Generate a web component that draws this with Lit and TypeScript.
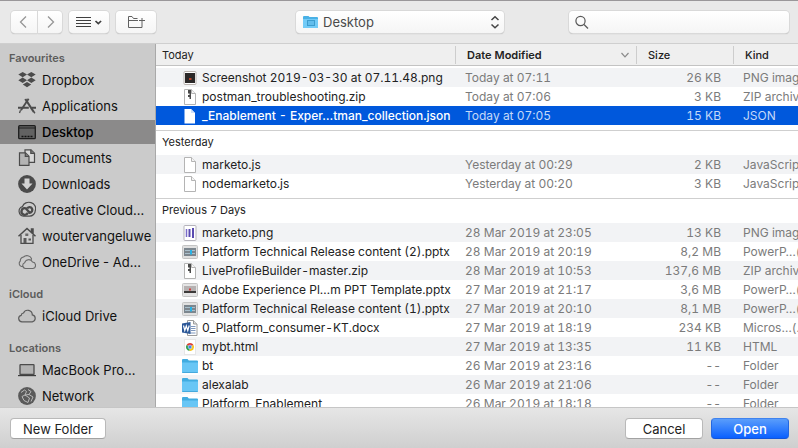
import { LitElement, html, svg, css, nothing } from "lit";
import { customElement, property, state } from "lit/decorators.js";
import { classMap } from "lit/directives/class-map.js";

const page = svg`<path d="M2.500 .5h7l4 4v11h-11z" fill="#fff" stroke="#b4b4b4"/><path d="M9.500 .5v4h4" fill="#f4f4f4" stroke="#b4b4b4"/>`;

const fileIcons: Record<string, unknown> = {
  shot: svg`<rect x="2" y="1.500" width="12" height="13" rx="1" fill="#fff" stroke="#b9b2ae"/><rect x="3" y="3" width="10" height="10" fill="#2b2828"/><rect x="7" y="8" width="2.500" height="2" fill="#b8442a"/>`,
  zip: svg`${page}<path d="M6 1h3v9H7.500V8H6V6h1.500V4.500H6z" fill="#4a4a4a"/>`,
  doc: page,
  docSelected: svg`<path d="M2.500 1h6.500l4 4v10.500H2.500z" fill="#fff"/><path d="M9 1v4h4" fill="#cfe0fa"/>`,
  bars: svg`<rect x="2" y=".5" width="12" height="15" rx="1" fill="#fff" stroke="#b5b3bb"/><path d="M4.500 4v8" stroke="#7a6cc8" stroke-width="1.500"/><path d="M7.500 4v8" stroke="#5a4bb0" stroke-width="2"/><path d="M11 3v10" stroke="#5a4bb0" stroke-width="2"/>`,
  deckBlue: svg`<rect x=".5" y="1.500" width="15" height="13" rx="1" fill="#e0e0e0" stroke="#c4c4c4"/><rect x="2" y="4" width="12" height="8" fill="#7c868e"/><path d="M3 6.500h10M3 9.500h10" stroke="#a9bfcc"/><rect x="8" y="6" width="2" height="4.500" fill="#27b4e8"/>`,
  deckRed: svg`<rect x=".5" y="1.500" width="15" height="13" rx="1" fill="#e4e4e4" stroke="#c4c4c4"/><rect x="2" y="4" width="12" height="5" fill="#b5b1b1"/><rect x="2" y="9" width="12" height="2" fill="#3c3a3a"/><rect x="7" y="6.500" width="2" height="2" fill="#d33c3c"/>`,
  word: svg`<path d="M5.500 .5h6l3.500 3.500v11.500h-9.500z" fill="#fff" stroke="#9c9c9c"/><path d="M11.500 .5v3.500h3.500" fill="#ddd" stroke="#9c9c9c"/><path d="M9 6.500h4.500M9 8.500h4.500M9 10.500h4.500M7 13h6.500" stroke="#7f97bd"/><path d="M0 3.500 8.500 2v12L0 12.500z" fill="#2b5797"/><path d="M1.500 5.500 2.800 10.500 4.300 6l1.500 4.500L7.200 5.500" fill="none" stroke="#fff" stroke-width="1.200"/>`,
  chrome: svg`<rect x="2.500" y=".5" width="11" height="15" fill="#fff" stroke="#e6e6e6"/><path d="M8 8 4.500 6A4 4 0 0 1 11.500 6z" fill="#dd3b2e"/><path d="M8 8 4.500 6A4 4 0 0 0 7.500 12z" fill="#2d9d4e"/><path d="M8 8h0L11.500 6A4 4 0 0 1 7.500 12z" fill="#f5c518"/><circle cx="8" cy="8" r="1.900" fill="#4187f0" stroke="#fff" stroke-width=".5"/>`,
  folder: svg`<path d="M0 2q0-1 1-1h4.500l1.300 1.500H15q1 0 1 1V14q0 1-1 1H1q-1 0-1-1z" fill="#41ace0"/><path d="M0 4.500h16V14q0 1-1 1H1q-1 0-1-1z" fill="#68c6f5"/><path d="M.5 14.500h15" stroke="#45a9dc"/>`,
};

const placeIcons: Record<string, unknown> = {
  dropbox: svg`<g fill="#4b4b4b"><path d="M4.700 1 9 3.600 4.700 6.300.3 3.600zM13.300 1l4.400 2.600-4.400 2.700L9 3.600zM4.700 6.600 9 9.200l-4.300 2.700L.3 9.200zM13.300 6.600l4.400 2.600-4.400 2.700L9 9.200zM9 11l4.200 2.600L9 16.200l-4.200-2.600z"/></g>`,
  apps: svg`<g fill="none" stroke="#4b4b4b"><path d="M7.300 2 15.800 15" stroke-width="2.200"/><path d="M10.600 1.800 3 13.200" stroke-width="1.900"/><path d="M0 10.800h10.800M13.800 10.800H18" stroke-width="1.900"/><path d="M2.500 13.200l-1 2.800M15.500 14.500l1.500 1.700" stroke-width="1.300"/></g>`,
  desktop: svg`<rect x=".7" y="2.700" width="16.600" height="13" rx="1" fill="#626262" stroke="#1e1e1e" stroke-width="1.300"/><path d="M1 5h16" stroke="#1e1e1e"/><path d="M3.500 13.500h11" stroke="#111" stroke-width="1.600" stroke-dasharray="2 1"/>`,
  documents: svg`<g fill="#d9d9d9" stroke="#4b4b4b" stroke-width="1.200"><path d="M7 .8h6l3.500 3.500v9H7z"/><path d="M12.800.8v3.700h3.700" fill="#777"/><path d="M1.500 3.800h6l3.500 3.500v9H1.500z" fill="#b4b4b4"/><path d="M7.300 3.800v3.700H11" fill="#777"/></g>`,
  downloads: svg`<circle cx="9" cy="9" r="8.900" fill="#4b4b4b"/><path d="M6.500 3.500h5V8.500h3L9 14.500 3.500 8.500h3z" fill="#d4d4d4"/>`,
  creative: svg`<g fill="none" stroke="#4b4b4b"><path d="M5.500 15.200A5 5 0 0 1 4.500 5.500 6.500 6 0 0 1 17.300 9.500a5.800 5.800 0 0 1-5.800 5.700z" stroke-width="1.200"/><path d="M9.800 11.800A3.300 3.300 0 1 1 7.600 7.300l4.200 4.500a2.800 2.800 0 1 0-2.500-4.500" stroke-width="2.300"/></g>`,
  home: svg`<path d="M3 8v8.300h12V8" fill="#d0d0d0" stroke="#4b4b4b" stroke-width="1.300"/><path d="M.5 9.200 9 1.500l8.500 7.700M13.500 5V2h1.500v4.500" fill="none" stroke="#4b4b4b" stroke-width="1.500"/><rect x="7.300" y="6.500" width="3" height="2.500" fill="#6a6a6a"/><path d="M5.500 11h3v5h-3zM10.500 11.500h2.500v2h-2.500z" fill="#5a5a5a"/>`,
  onedrive: svg`<g fill="#cbcbcb" stroke="#6a6a6a" stroke-width="1.100"><path d="M3.500 13.500A3.200 3.200 0 0 1 2.300 8 4 4 0 0 1 5.500 4 5 5 0 0 1 13.500 5.500l-2 8z"/><path d="M7.500 15.500a3 3 0 0 1-.8-5.800A4.200 4.200 0 0 1 14.500 9a3.300 3.300 0 0 1 .5 6.500z"/></g>`,
  icloud: svg`<path d="M4 14.800A3.300 3.300 0 0 1 3.200 8.300 2.600 2.600 0 0 1 5.500 6 4.600 4.600 0 0 1 14.300 7.900 3.500 3.500 0 0 1 14.300 14.800z" fill="#c3c3c3" stroke="#5c5c5c" stroke-width="1.200"/>`,
  macbook: svg`<rect x="2" y="3.700" width="14" height="9.800" rx=".6" fill="#b2b2b2" stroke="#4b4b4b" stroke-width="1.300"/><path d="M0 14h18v1.200H0z" fill="#3d3d3d"/>`,
  network: svg`<circle cx="9" cy="9" r="8.900" fill="#5a5a5a"/><path d="M3 5.500 6.500 3l2 1.500L7 8l-3 1.500 2 4M10 2.500l3 2-2 3 4 2.500-2 4.500M7 8l4-.5M6 13.500l4 2 1.500-4.500L7 8" fill="none" stroke="#b9b9b9"/>`,
};

interface FileEntry { name: string; icon: string; date: string; size: string; kind: string; }

const f = (icon: string, name: string, date: string, size: string, kind: string): FileEntry => ({ name, icon, date, size, kind });

const groups: { title: string; files: FileEntry[] }[] = [
  { title: "Today", files: [
    f("shot", "Screenshot 2019-03-30 at 07.11.48.png", "Today at 07:11", "26 KB", "PNG image"),
    f("zip", "postman_troubleshooting.zip", "Today at 07:06", "3 KB", "ZIP archive"),
    f("doc", "_Enablement - Exper…tman_collection.json", "Today at 07:05", "15 KB", "JSON"),
  ] },
  { title: "Yesterday", files: [
    f("doc", "marketo.js", "Yesterday at 00:29", "2 KB", "JavaScript"),
    f("doc", "nodemarketo.js", "Yesterday at 00:20", "3 KB", "JavaScript"),
  ] },
  { title: "Previous 7 Days", files: [
    f("bars", "marketo.png", "28 Mar 2019 at 23:05", "13 KB", "PNG image"),
    f("deckBlue", "Platform Technical Release content (2).pptx", "28 Mar 2019 at 20:19", "8,2 MB", "PowerP…(.pptx)"),
    f("zip", "LiveProfileBuilder-master.zip", "28 Mar 2019 at 10:53", "137,6 MB", "ZIP archive"),
    f("deckRed", "Adobe Experience Pl…m PPT Template.pptx", "27 Mar 2019 at 21:17", "3,6 MB", "PowerP…(.pptx)"),
    f("deckBlue", "Platform Technical Release content (1).pptx", "27 Mar 2019 at 20:10", "8,1 MB", "PowerP…(.pptx)"),
    f("word", "0_Platform_consumer-KT.docx", "27 Mar 2019 at 18:19", "234 KB", "Micros…(.docx)"),
    f("chrome", "mybt.html", "27 Mar 2019 at 13:35", "11 KB", "HTML"),
    f("folder", "bt", "26 Mar 2019 at 23:16", "--", "Folder"),
    f("folder", "alexalab", "26 Mar 2019 at 21:06", "--", "Folder"),
    f("folder", "Platform_Enablement", "26 Mar 2019 at 18:18", "--", "Folder"),
  ] },
];

const places = [
  { title: "Favourites", items: [
    ["dropbox", "Dropbox"], ["apps", "Applications"], ["desktop", "Desktop"], ["documents", "Documents"],
    ["downloads", "Downloads"], ["creative", "Creative Cloud…"], ["home", "woutervangeluwe"], ["onedrive", "OneDrive - Ad…"],
  ] },
  { title: "iCloud", items: [["icloud", "iCloud Drive"]] },
  { title: "Locations", items: [["macbook", "MacBook Pro…"], ["network", "Network"]] },
];

@customElement("dialog-toolbar")
class DialogToolbar extends LitElement {
  static styles = css`
    :host { display: grid; grid-template-columns: 1fr 208px 1fr; align-items: start; padding: 10px 9px 9px 11px;
      background: #e9e9e9; border-top: 1px solid #9a979a; border-bottom: 1px solid #cfcfcf; }
    .tools { display: flex; gap: 7px; }
    .pair { display: flex; gap: 1px; }
    button, select, input { box-sizing: border-box; height: 22px; margin: 0; border: 0; border-radius: 4px;
      font: inherit; color: #4a4a4a; background: linear-gradient(#fff, #f5f5f5);
      box-shadow: 0 0 0 1px #d9d9d9, 0 1px 1px #a8a8a8; }
    button { display: flex; align-items: center; justify-content: center; padding: 0; }
    .back { width: 26px; border-radius: 4px 0 0 4px; }
    .forward { width: 24px; border-radius: 0 4px 4px 0; }
    .wide { width: 40px; }
    .field { position: relative; display: block; height: 23px; }
    .field svg { position: absolute; top: 3px; pointer-events: none; }
    .field .lead { left: 6px; }
    .field .updown { right: 4px; }
    select { appearance: none; width: 100%; padding: 0 20px 0 27px; font-size: 13px; }
    .search { width: 220px; max-width: 90%; justify-self: end; }
    input { width: 100%; padding: 0 8px 0 24px; }
  `;
  render() {
    return html`
      <div class="tools">
        <div class="pair">
          <button class="back" aria-label="Back"><svg width="16" height="16" fill="none" stroke="#969696" stroke-width="1.300"><path d="M10 2.500 4.500 8 10 13.500"/></svg></button>
          <button class="forward" aria-label="Forward"><svg width="16" height="16" fill="none" stroke="#969696" stroke-width="1.300"><path d="M6 2.500 11.500 8 6 13.500"/></svg></button>
        </div>
        <button class="wide" aria-label="View options" aria-haspopup="menu"><svg width="28" height="16" fill="none" stroke="#3f3f3f"><path d="M1 3.500h15M1 6.500h15M1 9.500h15M1 12.500h15"/><path d="M20.500 7l2.800 2.600L26.100 7" stroke-width="1.700"/></svg></button>
        <button class="wide" aria-label="Group items"><svg width="18" height="16" fill="none" stroke="#606060"><path d="M10.500 4.500H6.500L5 2.500H1.500v11h13.500V10M1.500 6.500h9.500M15 4v6M12 6.500h6"/></svg></button>
      </div>
      <label class="field">
        <svg class="lead" width="18" height="16"><path d="M1 3q0-1 1-1h4.500l1 1H15q1 0 1 1v9q0 1-1 1H2q-1 0-1-1z" fill="#49b1e6"/><path d="M1 5h15v8q0 1-1 1H2q-1 0-1-1z" fill="#72cbf7"/><rect x="5.500" y="6.500" width="7" height="5" fill="#62bdec" stroke="#3d9dce"/></svg>
        <select aria-label="Folder"><option>Desktop</option></select>
        <svg class="updown" width="10" height="16" fill="none" stroke="#444" stroke-width="1.500"><path d="M1.500 6 5 2.700 8.500 6M1.500 10.500 5 13.800l3.500-3.300"/></svg>
      </label>
      <label class="field search">
        <svg class="lead" width="14" height="16" fill="none" stroke="#585858" stroke-width="1.200"><circle cx="5.500" cy="7" r="4.600"/><path d="M9 10.500l4 4"/></svg>
        <input type="text" aria-label="Search">
      </label>`;
  }
}

@customElement("places-list")
class PlacesList extends LitElement {
  static styles = css`
    :host { display: block; overflow: hidden; background: #cbcbcb; border-right: 1px solid #a9a9a9; padding-top: 5px; }
    h2 { margin: 0 0 1px; padding-left: 9px; font-size: 11px; line-height: 18px; font-weight: 600; color: #5c5c5c; }
    ul { list-style: none; margin: 0 0 11px; padding: 0; display: grid; gap: 2px; }
    a { display: flex; align-items: center; gap: 6px; padding-left: 18px; height: 24px; font-size: 13px;
      color: #111; text-decoration: none; white-space: nowrap; }
    a.current { background: #8b8a8a; color: #000; font-weight: 500; }
    svg { flex: none; }
  `;
  render() {
    return places.map((s) => html`<h2>${s.title}</h2><ul>${s.items.map(([icon, name]) => html`
      <li><a href="#" class=${classMap({ current: name === "Desktop" })}><svg width="18" height="18">${placeIcons[icon]}</svg>${name}</a></li>`)}</ul>`);
  }
}

@customElement("file-table")
class FileTable extends LitElement {
  @state() selected = "_Enablement - Exper…tman_collection.json";
  static styles = css`
    :host { display: block; overflow: hidden; background: #fff; }
    table { width: 100%; table-layout: fixed; border-spacing: 0; font-size: 12px; line-height: 16px; font-variant-numeric: tabular-nums; }
    th, td { box-sizing: border-box; padding: 0; overflow: hidden; white-space: nowrap; text-align: left; font-weight: 400; }
    .date { width: 181px; } .size { width: 97px; } .kind { width: 65px; }
    thead th { height: 22px; background: #efefef; border-bottom: 1px solid #c3c3c3; font-size: 11px; color: #222; font-weight: 500; }
    thead .label { display: flex; align-items: center; justify-content: space-between; box-sizing: border-box;
      height: 18px; padding: 0 7px 0 11px; border-left: 1px solid #cdcdcd; }
    thead .first .label { border-left: 0; padding-left: 6px; font-weight: 400; }
    thead .sorted { font-weight: 600; }
    thead::after { content: ""; display: table-row; height: 2px; }
    tbody::after { content: ""; display: table-row; height: 5px; }
    .group th { height: 25px; padding: 0 0 2px 6px; border-top: 1px solid #cfcfcf; font-size: 11px; color: #222; }
    td { height: 19px; color: #7b7b7b; padding-left: 10px; }
    td.name { padding-left: 26px; color: #222; }
    .cell { display: flex; align-items: center; gap: 4px; }
    .cell svg { flex: none; }
    td.bytes { text-align: right; padding: 0 12px 0 0; }
    .odd td { background: #f2f3f5; }
    .selected td { background: #0058dc; color: #c4d9f8; }
    .selected td.name { color: #fff; font-weight: 500; }
  `;
  render() {
    return html`<table>
      <thead><tr>
        <th class="first"><div class="label">Today</div></th>
        <th class="date sorted" aria-sort="descending"><div class="label">Date Modified<svg width="8" height="6" fill="none" stroke="#8a8a8a" stroke-width="1.200"><path d="M.5 1 4 4.800 7.500 1"/></svg></div></th>
        <th class="size"><div class="label">Size</div></th>
        <th class="kind"><div class="label">Kind</div></th>
      </tr></thead>
      ${groups.map((g, gi) => html`<tbody>
        ${gi ? html`<tr class="group"><th colspan="4" scope="rowgroup">${g.title}</th></tr>` : nothing}
        ${g.files.map((r, i) => {
          const selected = r.name === this.selected;
          return html`<tr class=${classMap({ odd: i % 2 === 0, selected })} @click=${() => { this.selected = r.name; }}>
            <td class="name"><div class="cell"><svg width="16" height="16">${fileIcons[selected && r.icon === "doc" ? "docSelected" : r.icon]}</svg>${r.name}</div></td>
            <td>${r.date}</td><td class="bytes">${r.size}</td><td>${r.kind}</td></tr>`;
        })}</tbody>`)}
    </table>`;
  }
}

@customElement("app-root")
class AppRoot extends LitElement {
  @property() action = "Open";
  static styles = css`
    :host { display: grid; grid-template-rows: auto 1fr auto; height: 100vh; overflow: hidden;
      font-family: Inter, "Liberation Sans", sans-serif; }
    main { display: grid; grid-template-columns: 156px 1fr; min-height: 0; }
    footer { display: flex; gap: 8px; padding: 10px 9px 9px 10px; border-top: 1px solid #c6c6c6;
      background: linear-gradient(#e6e6e6, #cfcfcf); }
    button { box-sizing: border-box; height: 21px; min-width: 78px; padding: 0 12px; border: 1px solid #b9b9b9; border-bottom-color: #a2a2a2;
      border-radius: 4px; background: #fff; font: inherit; font-size: 13px; line-height: 16px; color: #222; }
    .spacer { flex: 1; }
    .primary { background: linear-gradient(#5a9dfb, #0a60ff); border-color: #3f83ee #2467e0 #1354d8; color: #fff; font-weight: 500; }
  `;
  render() {
    return html`
      <dialog-toolbar></dialog-toolbar>
      <main><places-list></places-list><file-table></file-table></main>
      <footer><button>New Folder</button><span class="spacer"></span><button>Cancel</button><button class="primary">${this.action}</button></footer>`;
  }
}
